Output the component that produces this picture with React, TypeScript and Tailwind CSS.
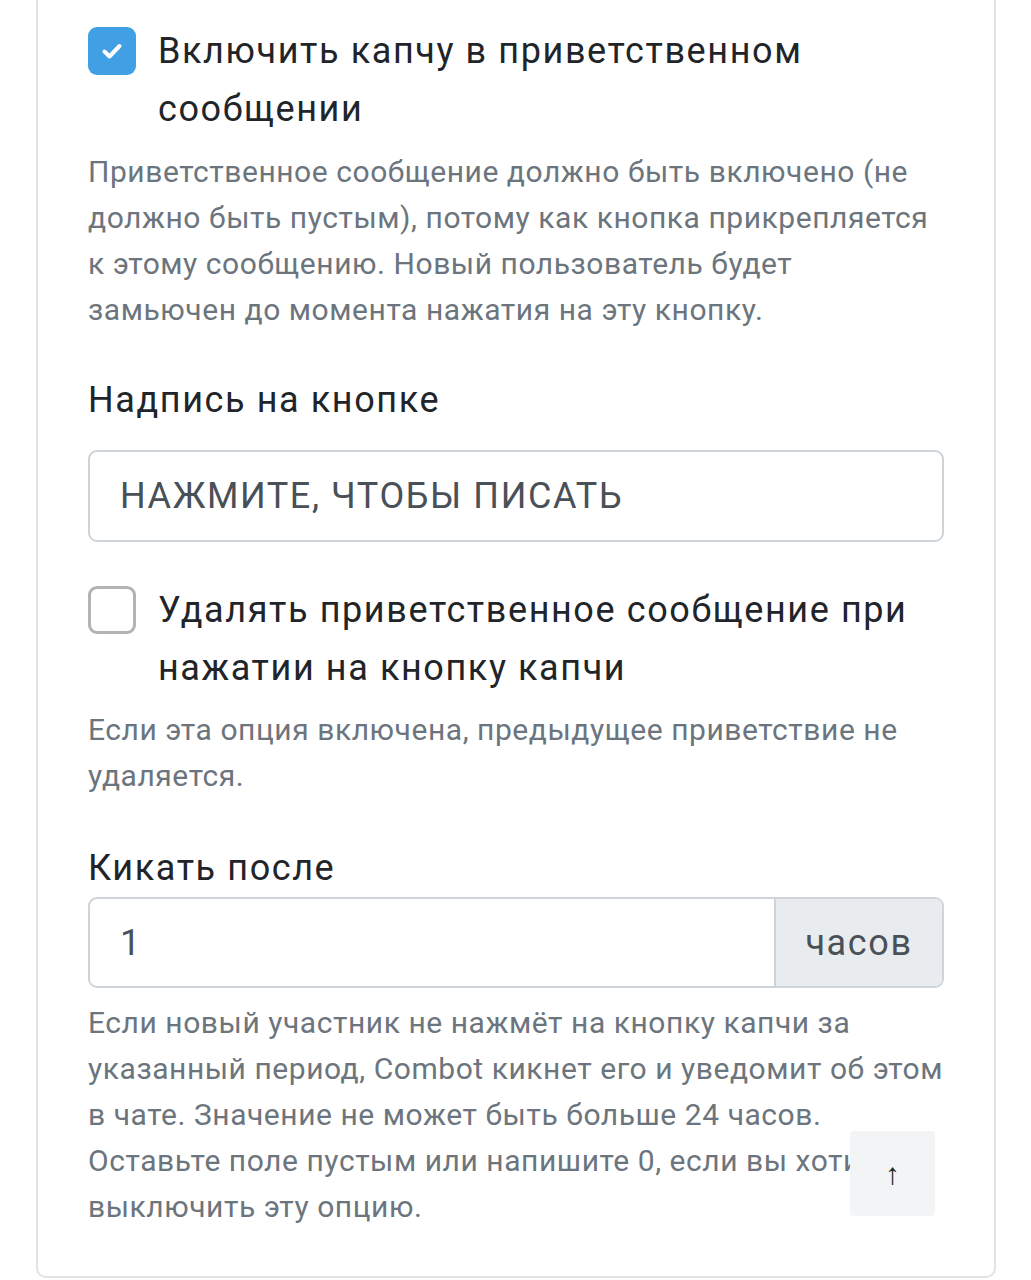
const Help = ({ children }: { children: React.ReactNode }) => (
  <p className="whitespace-nowrap text-[30px] leading-[46px] tracking-[0.55px] text-[#6c757d]">{children}</p>
)

const CheckRow = ({ checked, children }: { checked: boolean; children: React.ReactNode }) => (
  <label className="flex items-start gap-[22px]">
    <span
      className={
        checked
          ? 'mt-[5px] flex h-[48px] w-[48px] shrink-0 items-center justify-center rounded-[9px] bg-[#40a0e3]'
          : 'mt-[5px] flex h-[48px] w-[48px] shrink-0 items-center justify-center rounded-[9px] border-[3px] border-[#b3b3b3] bg-white'
      }
    >
      {checked && (
        <svg viewBox="0 0 24 24" className="h-[24px] w-[24px]" fill="none">
          <path d="M4.5 12.5l5 5L19.5 7" stroke="white" strokeWidth="4" strokeLinecap="round" strokeLinejoin="round" />
        </svg>
      )}
    </span>
    <span className="whitespace-nowrap text-[36px] leading-[58px] tracking-[1.6px] text-[#212529]">{children}</span>
  </label>
)

export default function App() {
  return (
    <div className="relative h-[1280px] w-[1031px] overflow-hidden bg-white font-['Roboto',sans-serif]">
      <div className="ml-[36px] w-[960px] rounded-b-[10px] border-2 border-t-0 border-[#e1e3e5] px-[50px] pb-[46px] pt-[22px]">
        <CheckRow checked>
          Включить капчу в приветственном
          <br />
          сообщении
        </CheckRow>
        <div className="mt-[11px]">
          <Help>
            Приветственное сообщение должно быть включено (не
            <br />
            должно быть пустым), потому как кнопка прикрепляется
            <br />
            к этому сообщению. Новый пользователь будет
            <br />
            замьючен до момента нажатия на эту кнопку.
          </Help>
        </div>

        <div className="mt-[40px] text-[36px] leading-[54px] tracking-[1.6px] text-[#212529]">Надпись на кнопке</div>
        <div className="mt-[23px] flex h-[92px] items-center rounded-[9px] border-2 border-[#ced4da] px-[30px] text-[36px] tracking-[1.6px] text-[#495057]">
          НАЖМИТЕ, ЧТОБЫ ПИСАТЬ
        </div>

        <div className="mt-[39px]">
          <CheckRow checked={false}>
            Удалять приветственное сообщение при
            <br />
            нажатии на кнопку капчи
          </CheckRow>
        </div>
        <div className="mt-[10px]">
          <Help>
            Если эта опция включена, предыдущее приветствие не
            <br />
            удаляется.
          </Help>
        </div>

        <div className="mt-[42px] text-[36px] leading-[54px] tracking-[1.6px] text-[#212529]">Кикать после</div>
        <div className="mt-[2px] flex h-[91px] rounded-[9px] border-2 border-[#ced4da] text-[36px] tracking-[1.6px]">
          <div className="flex flex-1 items-center px-[30px] text-[#495057]">1</div>
          <div className="flex w-[168px] items-center justify-center rounded-r-[7px] border-l-2 border-[#ced4da] bg-[#e9ecef] text-[#495057]">
            часов
          </div>
        </div>
        <div className="mt-[12px]">
          <Help>
            Если новый участник не нажмёт на кнопку капчи за
            <br />
            указанный период, Combot кикнет его и уведомит об этом
            <br />
            в чате. Значение не может быть больше 24 часов.
            <br />
            Оставьте поле пустым или напишите 0, если вы хотите
            <br />
            выключить эту опцию.
          </Help>
        </div>
      </div>

      <button className="absolute left-[850px] top-[1131px] flex h-[85px] w-[85px] items-center justify-center rounded-[4px] bg-[#f3f4f5] text-[30px] text-[#222]">
        ↑
      </button>
    </div>
  )
}
